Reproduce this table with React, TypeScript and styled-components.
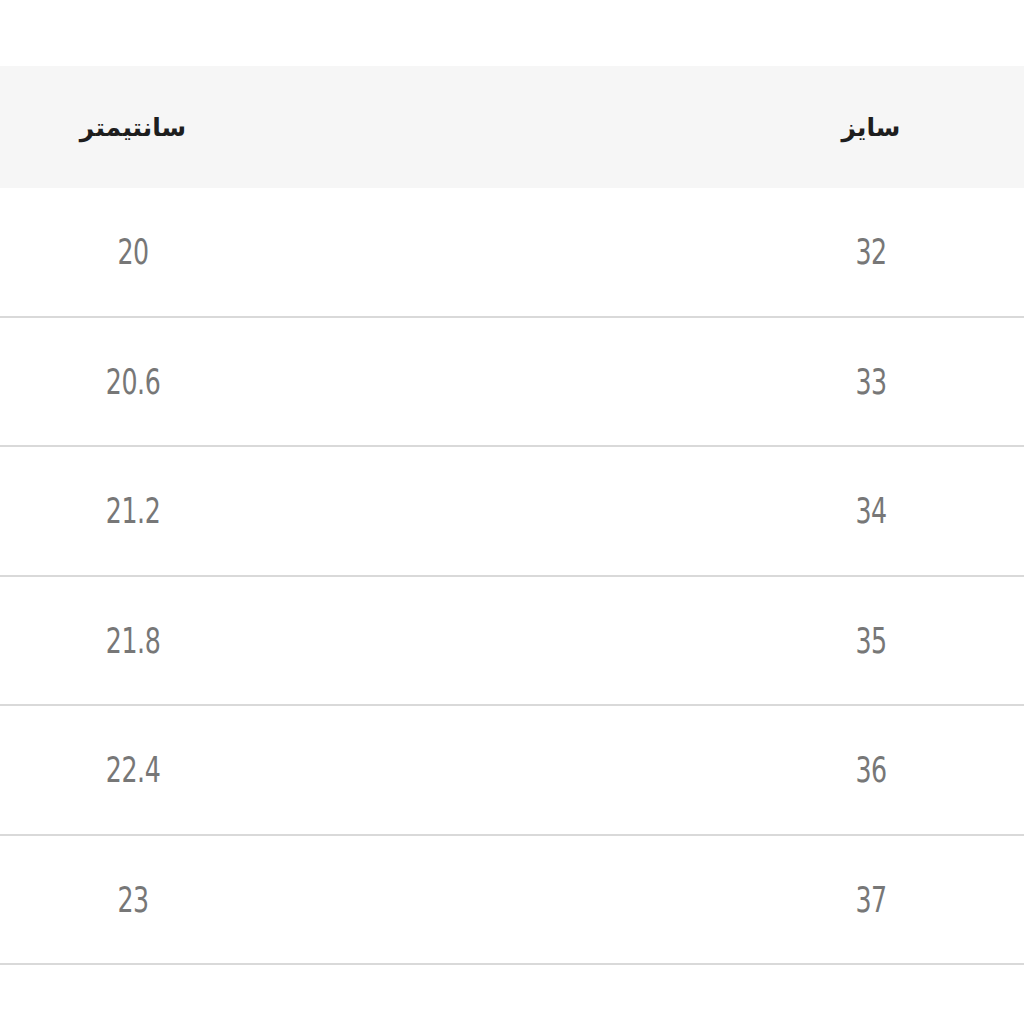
import React from 'react'
import styled, { createGlobalStyle } from 'styled-components'

const GlobalStyle = createGlobalStyle`
  body {
    margin: 0;
    background: #ffffff;
    font-family: "DejaVu Sans", "Noto Sans", sans-serif;
  }
`

const Page = styled('div')`
  width: 1024px;
  padding-top: 66px;
  direction: rtl;
`

const Table = styled('div')`
  display: flex;
  flex-direction: column;
`

const HeadRow = styled('div')`
  display: flex;
  justify-content: space-between;
  align-items: center;
  height: 122px;
  background: #f6f6f6;
`

const Row = styled('div')`
  display: flex;
  justify-content: space-between;
  align-items: center;
  box-sizing: border-box;
  height: 129.5px;
  border-bottom: 2px solid #d9d9d9;
`

const Cell = styled('div')<{ $side: 'start' | 'end' }>`
  width: 200px;
  display: flex;
  justify-content: center;
  margin-right: ${({ $side }) => ($side === 'start' ? '53px' : '0')};
  margin-left: ${({ $side }) => ($side === 'end' ? '33px' : '0')};
`

const HeadText = styled('span')`
  font-family: "DejaVu Sans", sans-serif;
  font-weight: bold;
  font-size: 25px;
  color: #1e1e1e;
`

const Num = styled('span')`
  display: inline-block;
  font-family: "Liberation Sans Narrow", "DejaVu Sans Condensed", "Liberation Sans", sans-serif;
  font-size: 36px;
  color: #777777;
  transform: scaleX(0.78);
  letter-spacing: -0.5px;
`

const rows = [
  ['32', '20'],
  ['33', '20.6'],
  ['34', '21.2'],
  ['35', '21.8'],
  ['36', '22.4'],
  ['37', '23'],
]

export default function App() {
  return (
    <Page>
      <GlobalStyle />
      <Table>
        <HeadRow>
          <Cell $side="start">
            <HeadText>سایز</HeadText>
          </Cell>
          <Cell $side="end">
            <HeadText>سانتیمتر</HeadText>
          </Cell>
        </HeadRow>
        {rows.map(([size, cm]) => (
          <Row key={size}>
            <Cell $side="start">
              <Num>{size}</Num>
            </Cell>
            <Cell $side="end">
              <Num dir="ltr">{cm}</Num>
            </Cell>
          </Row>
        ))}
      </Table>
    </Page>
  )
}
